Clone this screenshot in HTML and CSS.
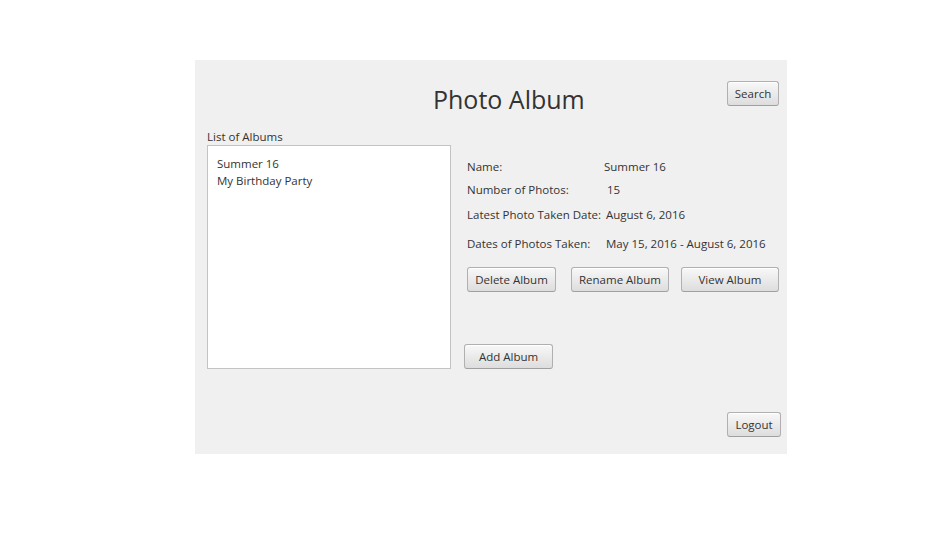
FILE: index.html
```html
<!DOCTYPE html>
<html>
<head>
<meta charset="utf-8">
<link rel="stylesheet" href="styles.css">
</head>
<body>
<div class="panel">
  <div class="header">
    <h1 class="title">Photo Album</h1>
    <button class="btn btn-search">Search</button>
  </div>
  <div class="content">
    <div class="left">
      <div class="list-label">List of Albums</div>
      <div class="list">
        <div class="list-item">Summer 16</div>
        <div class="list-item">My Birthday Party</div>
      </div>
    </div>
    <div class="right">
      <div class="info">
        <div class="row row-1"><span class="key">Name:</span><span class="val">Summer 16</span></div>
        <div class="row row-2"><span class="key">Number of Photos:</span><span class="val shift3">15</span></div>
        <div class="row row-3"><span class="key">Latest Photo Taken Date:</span><span class="val shift2">August 6, 2016</span></div>
        <div class="row row-4"><span class="key">Dates of Photos Taken:</span><span class="val shift2">May 15, 2016 - August 6, 2016</span></div>
      </div>
      <div class="actions">
        <button class="btn btn-delete">Delete Album</button>
        <button class="btn btn-rename">Rename Album</button>
        <button class="btn btn-view">View Album</button>
      </div>
      <button class="btn btn-add">Add Album</button>
    </div>
  </div>
  <div class="footer">
    <button class="btn btn-logout">Logout</button>
  </div>
</div>
</body>
</html>
```

FILE: styles.css
```css
html, body {
  margin: 0;
  padding: 0;
  background: #ffffff;
}
body {
  font-family: "Open Sans", "Noto Sans", sans-serif;
  font-size: 11.5px;
  color: #333333;
}
.panel {
  margin-left: 195px;
  margin-top: 60px;
  width: 592px;
  height: 394px;
  background: #f0f0f0;
  display: flex;
  flex-direction: column;
}
.header {
  display: flex;
  height: 66px;
}
.title {
  margin: 0;
  margin-left: 238px;
  margin-top: 22px;
  font-size: 25px;
  font-weight: 400;
  line-height: 34px;
  height: 34px;
  color: #333333;
}
.btn {
  font-family: "Open Sans", "Noto Sans", sans-serif;
  font-size: 11.5px;
  color: #333333;
  height: 25px;
  padding: 0;
  border: 1px solid #b0b0b0;
  border-bottom-color: #a0a0a0;
  border-radius: 3px;
  background: linear-gradient(#f8f8f8, #dddddd);
  box-shadow: inset 0 1px 0 #ffffff;
  line-height: 23px;
  text-align: center;
  box-sizing: border-box;
}
.btn-search {
  width: 52px;
  margin-left: auto;
  margin-right: 8px;
  margin-top: 21px;
}
.content {
  display: flex;
  padding-left: 12px;
}
.left {
  display: flex;
  flex-direction: column;
}
.list-label {
  padding-top: 2px;
  height: 17px;
  line-height: 17px;
}
.list {
  width: 244px;
  height: 224px;
  box-sizing: border-box;
  background: #ffffff;
  border: 1px solid #c3c3c3;
  padding: 9px 9px;
}
.list-item {
  line-height: 17px;
  height: 17px;
}
.right {
  display: flex;
  flex-direction: column;
  margin-left: 16px;
  padding-top: 30px;
}
.info {
  display: flex;
  flex-direction: column;
}
.row {
  display: flex;
  height: 22px;
  line-height: 22px;
}
.row-1 { height: 21px; line-height: 21px; margin-bottom: 2px; }
.row-2 { margin-bottom: 3px; }
.row-3 { margin-bottom: 7px; }
.key {
  width: 137px;
  flex: none;
}
.shift2 { margin-left: 2px; }
.shift3 { margin-left: 3px; }
.actions {
  display: flex;
  margin-top: 12px;
}
.btn-delete { width: 89px; }
.btn-rename { width: 98px; margin-left: 15px; }
.btn-view { width: 98px; margin-left: 12px; }
.btn-add {
  width: 89px;
  margin-top: 52px;
  margin-left: -3px;
}
.footer {
  display: flex;
  margin-top: 43px;
}
.btn-logout {
  width: 54px;
  margin-left: auto;
  margin-right: 6px;
}
```
